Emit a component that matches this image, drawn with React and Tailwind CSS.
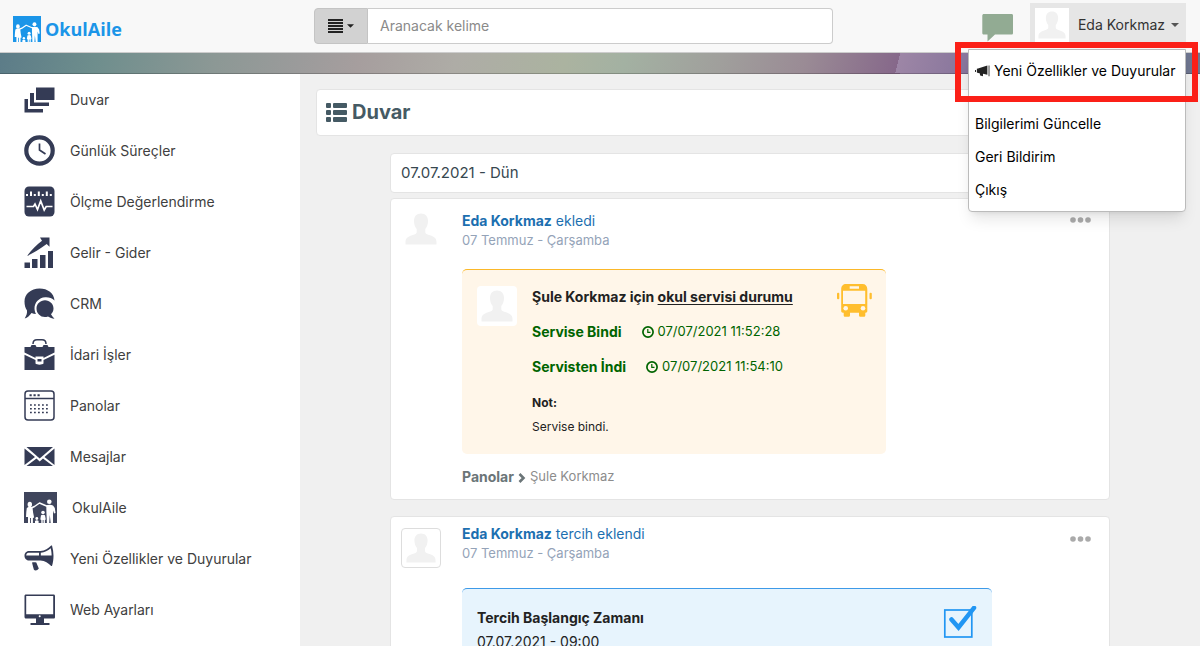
import React, { useState } from 'react';

const Silhouette = ({ className }) => (
  <svg viewBox="0 0 32 32" className={className} fill="currentColor" aria-hidden="true">
    <path d="M16 0.5c4.6 0 7 3 7 7.500c0 3.600-1.200 6.200-2.700 8v3.200c0 1.300 1.200 2 3 2.600c4.500 1.500 8.200 2.600 8.200 7.200v2.500h-31v-2.500c0-4.600 3.700-5.700 8.200-7.200c1.800-.6 3-1.300 3-2.600v-3.200c-1.500-1.800-2.700-4.400-2.700-8c0-4.500 2.400-7.500 7-7.500z" />
  </svg>
);

const FamilyIcon = ({ className }) => (
  <svg viewBox="0 0 33 31" className={className} preserveAspectRatio="none" aria-hidden="true">
    <rect width="33" height="31" fill="currentColor" />
    <g fill="#fff">
      <ellipse cx="5.800" cy="12.500" rx="2.200" ry="2.700" />
      <path d="M2.800 16c2-1.500 4-1.500 5.700-.5l.6 5 1 5-1.200.5V31H6.900v-5H6v5H4v-6H2l.3-5z" />
      <path d="M7 16l3.500-1.500 5-3.500 7 3h2" fill="none" stroke="#fff" strokeWidth="1.500" strokeLinejoin="round" />
      <circle cx="25.300" cy="9.800" r="2.300" />
      <path d="M22.300 13.500c2-1 4.700-1 6.700 0l1.800 2.500.7 5-1.500.5-1-3V31h-2.300l-.9-8-.6 8h-2.300l-.5-11z" />
      <circle cx="19" cy="20.500" r="1.800" />
      <path d="M17 23.300c1-.8 3.200-.8 4 0l.8 4.200-.9.5v3h-1.400v-3h-.8v3h-1.400v-3l-1-.5z" />
      <circle cx="12.800" cy="26.500" r="1.400" />
      <path d="M11 29c1-1 2.700-1 3.600 0v2H11z" />
    </g>
  </svg>
);

const Caret = ({ className }) => (
  <svg viewBox="0 0 8 4" className={className} fill="currentColor" aria-hidden="true">
    <path d="M0 0h8L4 4z" />
  </svg>
);

const ClockIcon = () => (
  <svg viewBox="0 0 12 12" className="mr-1 size-3 shrink-0" fill="none" stroke="currentColor" aria-hidden="true">
    <circle cx="6" cy="6" r="5.100" strokeWidth="1.700" />
    <path d="M5.800 3v3.300H8.500" strokeWidth="1.200" />
  </svg>
);

const icons = {
  wall: (
    <>
      <rect x="12" y="3.500" width="18.500" height="12.500" />
      <path d="M6 9h4v9.500h15v3.500H6z" />
      <path d="M0.500 15h3.500v10h15v3.500H0.500z" />
    </>
  ),
  clock: (
    <>
      <circle cx="15.500" cy="15.500" r="13.200" fill="none" stroke="currentColor" strokeWidth="4.200" />
      <path d="M15.500 8.500v6.500l6 4" fill="none" stroke="currentColor" strokeWidth="1.700" />
    </>
  ),
  measure: (
    <>
      <rect x="0.500" y="0.500" width="30" height="30" rx="4.500" />
      <path d="M3 10V8M7 10V5.500M10.800 10V8M14.800 10V5.500M18.800 10V8M22.800 10V5.500M26.800 10V8" stroke="#fff" strokeWidth="2" />
      <path d="M2.500 20.500h7l1.500-2.500 2.500 5.500 3.200-8.500 3.500 9 2-3.500h6.300" fill="none" stroke="#fff" strokeWidth="1.700" />
    </>
  ),
  income: (
    <>
      <path d="M0.500 25.500h5.500V31H0.500zM8 22h5.500v9H8zM16 18h5.500v13H16zM24 14h5v17h-5z" />
      <path d="M3 19C8 12.500 13 7.500 18 3.800L16 .5h9.500v9.200l-2.800-2.700C16 12 9.500 16 3 19z" />
    </>
  ),
  crm: (
    <>
      <path d="M15.500 0.500c8.300 0 14.500 4.800 15 12-2.500-2.500-5.700-3.500-9.300-3.300-6.200.4-10.700 5.200-10.700 11 0 2 .5 4 1.500 5.800-1.600-.1-3-.4-4.500-1-1.800 2.500-4 4.700-6.800 5.500 1.500-2.500 2.600-5 2.300-8C1.300 20 .5 17 .5 13.500.5 6 7 .5 15.500.5z" />
      <path d="M21 12.200c4.700 0 8.500 3.600 8.500 8.300 0 2.300-1 4.300-2.500 5.700.8 1.700 2 3 3.500 4.600-2.300-.3-4.800-1-6.500-2.300-6 2-11.500-2-11.500-8 0-4.700 3.800-8.300 8.500-8.300z" />
    </>
  ),
  briefcase: (
    <>
      <path d="M9 5c0-3 1.500-4.200 4-4.200h5c2.500 0 4 1.200 4 4.200" fill="none" stroke="currentColor" strokeWidth="1.500" />
      <path d="M0.500 8h6l1-2h4l1 2h6l1-2h4l1 2h6v5.500L19.500 19v-1.500h-8V19L.5 13.500z" />
      <path d="M0.500 15.800L11.500 21v3.500c1 1.500 7 1.500 8 0V21l11-5.200v15.200H0.500z" />
      <rect x="13.500" y="20" width="4" height="2.500" />
    </>
  ),
  board: (
    <>
      <rect x="1" y="1" width="29" height="29" rx="3" fill="none" stroke="currentColor" strokeWidth="1.500" />
      <path d="M1 8.500h29" stroke="currentColor" strokeWidth="1.500" />
      <path d="M5.500 5.200h11" stroke="currentColor" strokeWidth="2" strokeDasharray="2.200 1.800" />
      <path d="M6 15h18M6 18.800h18M6 22.600h18" stroke="currentColor" strokeWidth="1.500" strokeDasharray="1.800 2.200" />
    </>
  ),
  mail: (
    <>
      <path d="M2.500 6h26.500L15.700 17.500z" />
      <path d="M0.500 7.500L11 16 .5 24zM30.500 7.500L20.500 16l10 8z" />
      <path d="M12.500 17.500l3.200 3 3.300-3L29 25H2.500z" />
    </>
  ),
  megaphone: (
    <>
      <path d="M5 8h11.500c4.500-.3 7.800-2.500 10.700-5.500h.8c2 6.800 2 14 0 20.500h-.8c-2.900-3-6.200-5.200-10.700-5.500H5C-1 17.500-1 8 5 8zM4.500 9.800c-1.300.2-2.200 1.200-2.300 2.700H15V9.800zM16.800 9.700v2.800h10.800c0-2-.2-4.500-.9-7.200-3 2.500-6 4-9.900 4.400z" fillRule="evenodd" />
      <path d="M8 19.500c1.500-.5 3-.5 4.300 0l2.500 6c-1.500 2.300-4 2.500-5 1z" />
    </>
  ),
  monitor: (
    <>
      <path d="M2 .5h27.500c1 0 1.500.6 1.500 1.500v21c0 1-.5 1.500-1.500 1.500H20v4.500h5.500V31h-19v-2H12v-4.500H2c-1 0-1.500-.6-1.500-1.500V2C.5 1 1 .5 2 .5zM2.200 2v18.200h27V2z" fillRule="evenodd" />
      <circle cx="15.700" cy="22.300" r="1" fill="#fff" />
    </>
  ),
};

const menuItems = [
  { key: 'wall', label: 'Duvar' },
  { key: 'clock', label: 'Günlük Süreçler' },
  { key: 'measure', label: 'Ölçme Değerlendirme' },
  { key: 'income', label: 'Gelir - Gider' },
  { key: 'crm', label: 'CRM' },
  { key: 'briefcase', label: 'İdari İşler' },
  { key: 'board', label: 'Panolar' },
  { key: 'mail', label: 'Mesajlar' },
  { key: 'okulaile', label: 'OkulAile' },
  { key: 'megaphone', label: 'Yeni Özellikler ve Duyurular' },
  { key: 'monitor', label: 'Web Ayarları' },
];

const BusIcon = () => (
  <svg viewBox="0 0 35 33" className="h-[33px] w-[35px] shrink-0 text-[#ffbe2e]" fill="currentColor" aria-hidden="true">
    <path d="M9 0h16.500c3 0 4.800 2 4.800 5v22c0 1-.6 1.700-1.700 1.700h-.3v2.500c0 1-.6 1.600-1.600 1.600h-3c-1 0-1.700-.6-1.700-1.600v-2.500h-9v2.500c0 1-.6 1.600-1.700 1.600h-3c-1 0-1.600-.6-1.600-1.600v-2.500h-.8c-1 0-1.700-.7-1.700-1.700V5c0-3 2-5 4.800-5zM12.700 2.300v2.400H22V2.300zM6 6.700V20h22.200V6.700z" fillRule="evenodd" />
    <rect x="0" y="8.700" width="2.300" height="6.500" rx="1" />
    <rect x="32.500" y="8.700" width="2.300" height="6.500" rx="1" />
    <circle cx="8.700" cy="24.200" r="2.300" fill="#fff6e9" />
    <circle cx="26" cy="24.200" r="2.300" fill="#fff6e9" />
  </svg>
);

const Dots = () => (
  <button type="button" aria-label="Seçenekler" className="flex h-2 text-[#aaa]">
    <svg viewBox="0 0 21 6" className="h-[6px] w-[21px]" fill="currentColor">
      <circle cx="3" cy="3" r="2.800" />
      <circle cx="10.500" cy="3" r="2.800" />
      <circle cx="18" cy="3" r="2.800" />
    </svg>
  </button>
);

function Header() {
  const [open, setOpen] = useState(true);

  return (
    <header className="relative z-10 flex h-[53px] shrink-0 border-b border-[#ccc] bg-[#f8f8f8]">
      <a href="#" className="flex w-[300px] shrink-0 items-center gap-1 pt-[6px] pl-[13px] text-[#1b95e8]">
        <FamilyIcon className="h-[26px] w-7" />
        <span className="font-['Open_Sans',sans-serif] text-lg font-bold">OkulAile</span>
      </a>

      {/* Search */}
      <form className="mt-2 ml-[14px] flex h-9 max-w-[519px] flex-1">
        <button type="button" aria-label="Kategori" className="flex w-[54px] items-center justify-center gap-1 rounded-l border border-[#c4c4c4] bg-[#d2d2d2] text-[#222]">
          <svg viewBox="0 0 15 14" className="h-[14px] w-[15px]" stroke="currentColor" strokeWidth="1.800" aria-hidden="true">
            <path d="M0 1h15M0 4h15M0 7h15M0 10h15M0 13h15" />
          </svg>
          <Caret className="h-1 w-[7px]" />
        </button>
        <input
          type="text"
          aria-label="Arama"
          placeholder="Aranacak kelime"
          className="min-w-0 flex-1 rounded-r border border-l-0 border-[#ccc] bg-white px-3 text-sm outline-none placeholder:text-[#8a8a8a]"
        />
      </form>

      <div className="ml-auto flex pr-[14px]">
        <button type="button" aria-label="Mesajlar" className="mt-[14px] mr-4 h-7 w-8 text-[#92ab93]">
          <svg viewBox="0 0 32 28" className="h-7 w-8" fill="currentColor">
            <path d="M2 0h27.500c1 0 1.500.6 1.500 1.500v17.500c0 1-.6 1.500-1.500 1.500H13L5.500 27.500v-7H2c-1 0-1.700-.5-1.700-1.500V1.500C.3.600 1 0 2 0z" />
          </svg>
        </button>

        <div className="relative">
          <button
            type="button"
            onClick={() => setOpen(!open)}
            className="mt-[3px] flex h-11 items-center bg-[#e6e6e6] pr-[7px] pl-[5px] text-sm text-[#333]"
          >
            <span className="mr-[9px] flex size-[34px] items-center justify-center bg-white text-[#f1f1f1]">
              <Silhouette className="size-7" />
            </span>
            <span className="mr-[6px] whitespace-nowrap">Eda Korkmaz</span>
            <Caret className="h-1 w-2 text-[#555]" />
          </button>

          {open && (
            <div className="absolute top-[49px] right-0 w-[218px] rounded-b border border-[#bbb] bg-white pb-[5px] text-sm whitespace-nowrap text-black shadow-lg">
              <a href="#" className="flex h-[42px] items-center gap-1 pl-[6px]">
                <svg viewBox="0 0 16 12" className="h-3 w-[15px] shrink-0 text-[#222]" fill="currentColor">
                  <path d="M0 5h1v2H0zM2 3.700l1.200-.4v4.900L2 7.700zM3.200 3.300L13.200 0v10L8.500 9v2.500l-3-.8-.5-2.200-1.800-.4zM14.500 0h.9v11.500h-.9z" />
                </svg>
                Yeni Özellikler ve Duyurular
              </a>
              <hr className="mt-[6px] mb-2 border-[#e5e5e5]" />
              <a href="#" className="flex h-[33px] items-center pl-[6px]">Bilgilerimi Güncelle</a>
              <a href="#" className="flex h-[33px] items-center pl-[6px]">Geri Bildirim</a>
              <a href="#" className="flex h-[33px] items-center pl-[6px]">Çıkış</a>
              {/* Highlight */}
              <div className="pointer-events-none absolute -top-2 -right-[13px] h-[60px] w-[243px] border-[6px] border-[#fb2018]"></div>
            </div>
          )}
        </div>
      </div>
    </header>
  );
}

function Sidebar() {
  return (
    <nav className="w-[300px] shrink-0 bg-white">
      {menuItems.map((item) => (
        <a key={item.key} href="#" className="flex h-[51px] items-center gap-[15px] pl-6 text-sm text-[#404040]">
          {item.key === 'okulaile' ? (
            <FamilyIcon className="h-[31px] w-[33px] shrink-0 text-[#3f455c]" />
          ) : (
            <svg viewBox="0 0 31 31" className="size-[31px] shrink-0 text-[#343b55]" fill="currentColor" aria-hidden="true">
              {icons[item.key]}
            </svg>
          )}
          {item.label}
        </a>
      ))}
    </nav>
  );
}

function PostTitle({ name, action }) {
  return (
    <div className="flex-1">
      <div className="text-sm leading-[19px] text-[#1c6fb0]">
        <a href="#" className="font-bold">{name}</a> {action}
      </div>
      <div className="text-[13px] leading-[21px] text-[#94a3b8]">07 Temmuz - Çarşamba</div>
    </div>
  );
}

export default function App() {
  return (
    <div className="flex h-screen flex-col overflow-hidden bg-[#f0f0f0] font-['Inter',sans-serif]">
      <Header />
      <div className="h-[21px] shrink-0 border-b border-black/20 bg-[linear-gradient(104deg,#5c7c88_0%,#6e8e8d_8%,#8c9895_18%,#9b9b9b_25%,#a69e9e_30%,#aeaca6_38%,#abb3a0_47%,#a3b1a2_52%,#a09f9c_60%,#9a8b95_67%,#86688a_74.7%,#9d86a6_74.7%,#86749b_81%,#5d6585_90%,#707790_100%)]"></div>

      <div className="flex min-h-0 flex-1">
        <Sidebar />

        <main className="min-w-0 flex-1 overflow-hidden px-4 pt-[15px]">
          {/* Page title */}
          <div className="flex h-[47px] items-center gap-[5px] rounded border border-[#e4e4e4] bg-white px-[9px] pb-px text-[#455a64]">
            <svg viewBox="0 0 21 19" className="h-[19px] w-[21px]" fill="currentColor" aria-hidden="true">
              <rect width="5" height="5" rx="1" />
              <rect x="7" width="14" height="5" rx="1" />
              <rect y="7" width="5" height="5" rx="1" />
              <rect x="7" y="7" width="14" height="5" rx="1" />
              <rect y="14" width="5" height="5" rx="1" />
              <rect x="7" y="14" width="14" height="5" rx="1" />
            </svg>
            <h1 className="text-xl font-bold">Duvar</h1>
          </div>

          <div className="mx-auto mt-[17px] max-w-[720px]">
            <div className="flex h-[40px] items-center rounded border border-[#e4e4e4] bg-white px-[10px] text-[15px] text-[#37474f]">
              07.07.2021 - Dün
            </div>

            {/* School bus post */}
            <article className="mt-[5px] rounded border border-[#e4e4e4] bg-white pr-[18px] pb-3 pl-[10px]">
              <div className="flex gap-[21px] pt-3">
                <div className="flex size-10 justify-center pt-0.5 text-[#f1f1f1]">
                  <Silhouette className="size-8" />
                </div>
                <PostTitle name="Eda Korkmaz" action="ekledi" />
                <div className="pt-[6px]"><Dots /></div>
              </div>

              <div className="ml-[61px]">
                <section className="mt-[18px] flex max-w-[424px] gap-[15px] rounded-[5px] border-t border-[#fbb829] bg-[#fff6e9] pt-[9px] pr-[14px] pb-5 pl-[15px]">
                  <div className="mt-[7px] flex size-10 shrink-0 items-center justify-center rounded bg-white text-[#f1f1f1]">
                    <Silhouette className="size-8" />
                  </div>
                  <div className="flex-1">
                    <h2 className="text-sm leading-[35px] font-bold text-[#222]">
                      Şule Korkmaz için <span className="underline underline-offset-2">okul servisi durumu</span>
                    </h2>
                    <p className="flex h-[35px] items-center text-[#006400]">
                      <b className="mr-5 text-sm">Servise Bindi</b>
                      <ClockIcon />
                      <span className="text-[13px]">07/07/2021 11:52:28</span>
                    </p>
                    <p className="flex h-[35px] items-center text-[#006400]">
                      <b className="mr-5 text-sm">Servisten İndi</b>
                      <ClockIcon />
                      <span className="text-[13px]">07/07/2021 11:54:10</span>
                    </p>
                    <p className="mt-px text-xs leading-[35px] font-bold text-[#222]">Not:</p>
                    <p className="text-xs leading-[14px] text-[#222]">Servise bindi.</p>
                  </div>
                  <div className="pt-[5px]"><BusIcon /></div>
                </section>

                <div className="mt-[13px] flex h-5 items-center gap-1 text-[13px] text-[#8c8c8c]">
                  <a href="#" className="text-sm font-bold text-[#6b7578]">Panolar</a>
                  <svg viewBox="0 0 8 10" className="mt-0.5 h-[10px] w-2 text-[#6b7578]" fill="none" stroke="currentColor" strokeWidth="2.600" aria-hidden="true">
                    <path d="M1.500 1L5.500 5 1.500 9" />
                  </svg>
                  <a href="#">Şule Korkmaz</a>
                </div>
              </div>
            </article>

            {/* Preference post */}
            <article className="mt-4 rounded border border-[#e4e4e4] bg-white pr-[18px] pb-3 pl-[10px]">
              <div className="flex gap-[21px] pt-[7px]">
                <div className="mt-1 flex size-10 items-center justify-center rounded border border-[#ddd] text-[#f1f1f1]">
                  <Silhouette className="size-[30px]" />
                </div>
                <PostTitle name="Eda Korkmaz" action="tercih eklendi" />
                <div className="pt-3"><Dots /></div>
              </div>

              <section className="mt-5 ml-[61px] flex max-w-[530px] justify-between rounded-[5px] border-t border-[#3d9ae8] bg-[#e7f4fd] px-[15px] pt-[17px] pb-5">
                <div className="text-sm leading-6 text-[#222]">
                  <h2 className="font-bold">Tercih Başlangıç Zamanı</h2>
                  <p>07.07.2021 - 09:00</p>
                </div>
                <svg viewBox="0 0 34 34" className="size-[34px]" fill="none" stroke="#2196f3" aria-hidden="true">
                  <rect x="1.800" y="4" width="27" height="27" strokeWidth="1.700" />
                  <path d="M8.500 13.500l7 8L31 1.800" strokeWidth="4.500" strokeLinecap="round" />
                </svg>
              </section>
            </article>
          </div>
        </main>
      </div>
    </div>
  );
}
